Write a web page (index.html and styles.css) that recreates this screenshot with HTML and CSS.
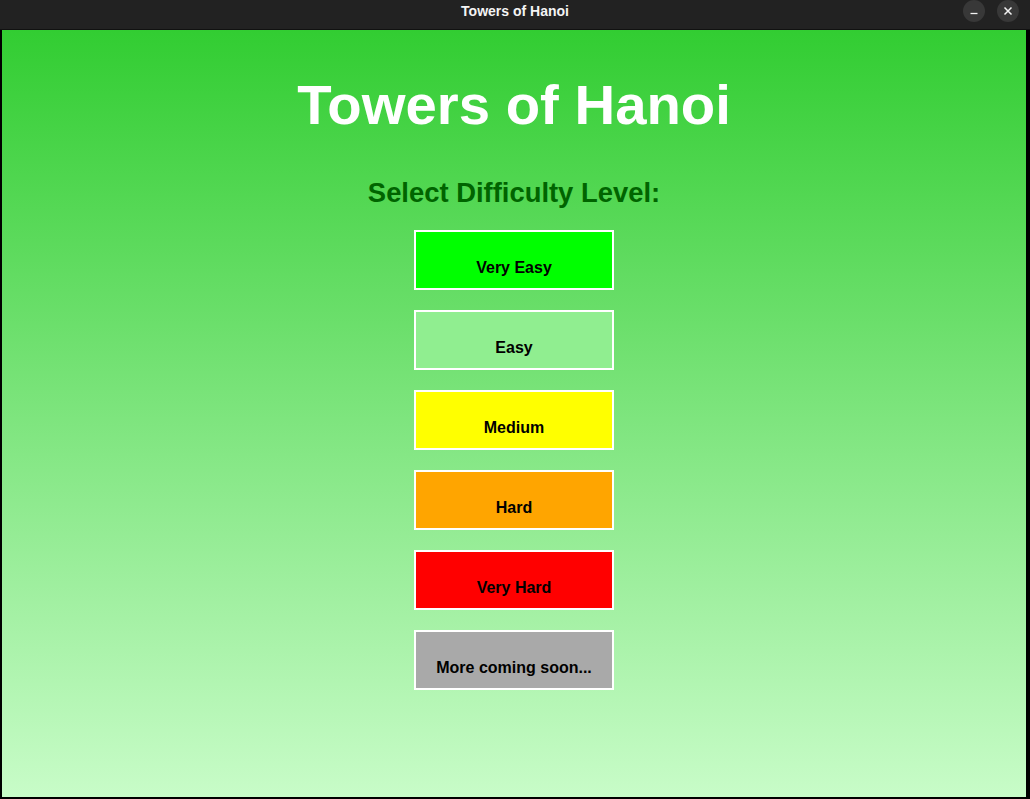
FILE: index.html
```html
<!DOCTYPE html>
<html>
<head>
<meta charset="utf-8">
<title>Towers of Hanoi</title>
<link rel="stylesheet" href="styles.css">
</head>
<body>
<div class="window">
  <div class="titlebar">
    <div class="spacer"></div>
    <div class="wintitle">Towers of Hanoi</div>
    <div class="controls">
      <span class="ctl">
        <svg width="22" height="22" viewBox="0 0 22 22"><line x1="7.5" y1="13.5" x2="14.5" y2="13.5" stroke="#f2f2f2" stroke-width="1.3"/></svg>
      </span>
      <span class="ctl">
        <svg width="22" height="22" viewBox="0 0 22 22"><path d="M7.5 7.5 L14.5 14.5 M14.5 7.5 L7.5 14.5" stroke="#f2f2f2" stroke-width="1.5" fill="none"/></svg>
      </span>
    </div>
  </div>
  <div class="content">
    <h1 class="title">Towers of Hanoi</h1>
    <h2 class="subtitle">Select Difficulty Level:</h2>
    <div class="levels">
      <div class="level very-easy">Very Easy</div>
      <div class="level easy">Easy</div>
      <div class="level medium">Medium</div>
      <div class="level hard">Hard</div>
      <div class="level very-hard">Very Hard</div>
      <div class="level soon">More coming soon...</div>
    </div>
  </div>
</div>
</body>
</html>
```

FILE: styles.css
```css
html, body {
  margin: 0;
  padding: 0;
  background: #000;
}

.window {
  width: 1030px;
  height: 799px;
  display: flex;
  flex-direction: column;
  background: #000;
}

.titlebar {
  height: 30px;
  box-sizing: border-box;
  background: #222222;
  display: grid;
  grid-template-columns: 1fr auto 1fr;
  border-bottom: 1px solid #111;
}

.wintitle {
  font-family: "Liberation Sans", Arial, sans-serif;
  font-weight: bold;
  font-size: 14px;
  line-height: 16px;
  color: #f4f4f4;
  padding-top: 3px;
}

.controls {
  justify-self: end;
  display: flex;
  gap: 12px;
  margin-right: 11px;
  padding-top: 0;
  align-self: start;
}

.ctl {
  width: 22px;
  height: 22px;
  border-radius: 50%;
  background: #383838;
  display: block;
}

.ctl svg {
  display: block;
}

.content {
  flex: 1;
  margin: 0 4px 2px 2px;
  background: linear-gradient(to bottom, #32cd32 0%, #c8fcc8 100%);
  display: flex;
  flex-direction: column;
  align-items: center;
  font-family: "Liberation Sans", Arial, Helvetica, sans-serif;
}

.title {
  margin: 43px 0 0 0;
  font-size: 56.3px;
  line-height: 64px;
  font-weight: bold;
  color: #ffffff;
}

.subtitle {
  margin: 40px 0 0 0;
  font-size: 27.4px;
  line-height: 32px;
  font-weight: bold;
  color: #006400;
}

.levels {
  margin-top: 21px;
  display: flex;
  flex-direction: column;
  gap: 20px;
}

.level {
  width: 200px;
  height: 60px;
  box-sizing: border-box;
  border: 2px solid #ffffff;
  padding-top: 27px;
  text-align: center;
  font-size: 16px;
  line-height: 18px;
  font-weight: bold;
  color: #000;
}

.very-easy { background: #00ff00; }
.easy { background: #90ee90; }
.medium { background: #ffff00; }
.hard { background: #ffa500; }
.very-hard { background: #ff0000; }
.soon { background: #a9a9a9; }
```
